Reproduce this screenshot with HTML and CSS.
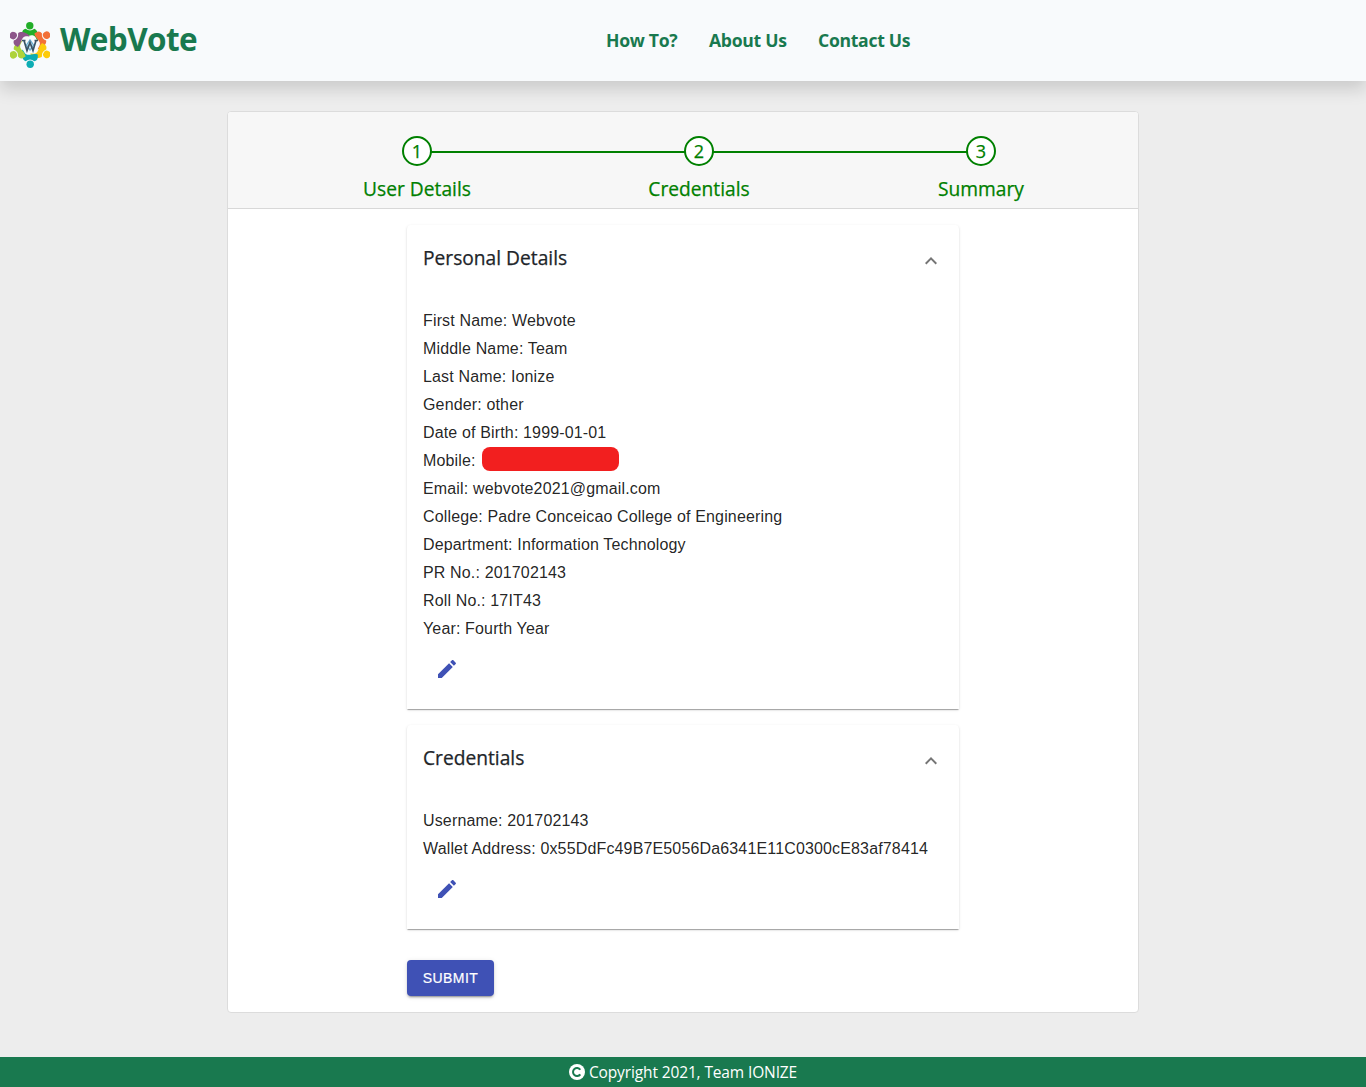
FILE: index.html
```html
<!DOCTYPE html>
<html lang="en">
<head>
<meta charset="utf-8">
<title>WebVote</title>
<link rel="stylesheet" href="styles.css">
</head>
<body>
<header class="navbar">
  <a class="brand">
    <svg class="logo" viewBox="0 0 40 46" aria-hidden="true">
      <defs><g id="person"><circle cx="19.800" cy="3.700" r="3.700"/><path d="M12.200 13.500V10.500Q12.500 7.500 15.700 6.800q4.300 3.200 8.600 0c2.700.9 4 4.600 4 8 0 1.600-.4 2.700-.9 3.700-1.400-2-2-4.600-4.700-5.200-3-.6-6 1.700-10.500.2z"/></g></defs>
      <use href="#person" fill="#22ae28"/>
      <use href="#person" fill="#f27038" transform="rotate(60 20 23)"/>
      <use href="#person" fill="#fdcb0b" transform="rotate(120 20 23)"/>
      <use href="#person" fill="#0dadb4" transform="rotate(180 20 23)"/>
      <use href="#person" fill="#aed33b" transform="rotate(240 20 23)"/>
      <use href="#person" fill="#8d558a" transform="rotate(300 20 23)"/>
      <path d="M16.500 23l3.500-5 3.500 5-3.500 5z" fill="#d8edf7" stroke="#69aed2" stroke-width="1.300"/>
      <path d="M12 18.500h3.500m9 0H28M14 18.500l3 10 3-8 3 8 3-10" fill="none" stroke="#3a5365" stroke-width="1.700"/>
    </svg>
    <span class="brand-name">WebVote</span>
  </a>
  <nav class="nav-links"><a class="how">How To?</a><a class="about">About Us</a><a class="contact">Contact Us</a></nav>
</header>
<main class="page">
  <section class="card">
    <ol class="stepper">
      <li class="step"><span class="dot">1</span><span class="label">User Details</span></li>
      <li class="step"><span class="dot">2</span><span class="label">Credentials</span></li>
      <li class="step"><span class="dot">3</span><span class="label">Summary</span></li>
    </ol>
    <div class="content">
      <article class="panel">
        <div class="panel-head"><h2>Personal Details</h2>
          <svg class="chevron" viewBox="0 0 24 24"><path d="M12 8l-6 6 1.410 1.410L12 10.830l4.590 4.580L18 14z"/></svg></div>
        <div class="details">
          <p>First Name: Webvote</p>
          <p>Middle Name: Team</p>
          <p>Last Name: Ionize</p>
          <p>Gender: other</p>
          <p>Date of Birth: 1999-01-01</p>
          <p class="mobile">Mobile: <span class="redacted"></span></p>
          <p>Email: webvote2021@gmail.com</p>
          <p>College: Padre Conceicao College of Engineering</p>
          <p>Department: Information Technology</p>
          <p>PR No.: 201702143</p>
          <p>Roll No.: 17IT43</p>
          <p>Year: Fourth Year</p>
        </div>
        <svg class="edit" viewBox="0 0 24 24"><path d="M3 17.250V21h3.750L17.810 9.940l-3.750-3.750L3 17.250zM20.710 7.040c.39-.39.39-1.020 0-1.410l-2.340-2.340c-.39-.39-1.020-.39-1.410 0l-1.830 1.830 3.750 3.750 1.830-1.830z"/></svg>
      </article>
      <article class="panel">
        <div class="panel-head"><h2>Credentials</h2>
          <svg class="chevron" viewBox="0 0 24 24"><path d="M12 8l-6 6 1.410 1.410L12 10.830l4.590 4.580L18 14z"/></svg></div>
        <div class="details">
          <p>Username: 201702143</p>
          <p>Wallet Address: 0x55DdFc49B7E5056Da6341E11C0300cE83af78414</p>
        </div>
        <svg class="edit" viewBox="0 0 24 24"><path d="M3 17.250V21h3.750L17.810 9.940l-3.750-3.750L3 17.250zM20.710 7.040c.39-.39.39-1.020 0-1.410l-2.340-2.340c-.39-.39-1.020-.39-1.410 0l-1.830 1.830 3.750 3.750 1.830-1.830z"/></svg>
      </article>
      <button class="submit">SUBMIT</button>
    </div>
  </section>
</main>
<footer class="footer">
  <svg class="copy" viewBox="0 0 16 16"><circle cx="8" cy="8" r="8" fill="#fff"/><path d="M11.300 5.700A4 4 0 1 0 11.300 10.300" fill="none" stroke="#19794f" stroke-width="2"/></svg>
  <span>Copyright 2021, Team IONIZE</span>
</footer>
</body>
</html>
```
FILE: styles.css
```css
* { box-sizing: border-box; }
body {
  margin: 0;
  min-height: 1087px;
  display: flex;
  flex-direction: column;
  background: #ededed;
  color: #212529;
  font-family: "Open Sans", "Noto Sans", sans-serif;
}
.navbar {
  position: relative;
  height: 81px;
  display: flex;
  background: #f8fafc;
  box-shadow: 0 8px 16px rgba(0, 0, 0, .15);
  color: #19794f;
  font-weight: 700;
}
.brand { display: flex; width: 606px; padding-left: 10px; }
.logo { width: 40px; height: 46px; margin-top: 22px; }
.brand-name { margin: 17px 0 0 10px; font-size: 31.500px; line-height: 44px; letter-spacing: -.6px; }
.nav-links { display: flex; padding-top: 27px; font-size: 17.600px; line-height: 27px; letter-spacing: -.3px; white-space: nowrap; }
.how { width: 103px; }
.about { width: 109px; }

.page { flex: 1; padding-top: 30px; }
.card {
  width: 912px;
  height: 902px;
  margin: 0 auto;
  background: #fff;
  border: 1px solid #dcdcdc;
  border-radius: 4px;
  overflow: hidden;
}
.stepper {
  display: flex;
  height: 97px;
  margin: 0;
  padding: 24px 16px 0 48px;
  list-style: none;
  background: #f7f7f7;
  border-bottom: 1px solid #d8d8d8;
  color: #008000;
  -webkit-text-stroke: .25px;
}
.step { position: relative; width: 282px; flex: none; display: flex; flex-direction: column; align-items: center; }
.step + .step::before {
  content: "";
  position: absolute;
  top: 15px;
  right: 50%;
  width: 282px;
  height: 2px;
  background: #008000;
}
.dot {
  position: relative;
  z-index: 1;
  width: 30px;
  height: 30px;
  border: 2px solid #008000;
  border-radius: 50%;
  background: #fff;
  font-size: 18px;
  line-height: 26px;
  text-align: center;
}
.step:not(:last-child) .dot { z-index: 2; }
.label { margin-top: 9px; font-size: 19.200px; line-height: 28px; white-space: nowrap; }

.content { width: 552px; margin: 16px auto 0; }
.panel {
  margin-bottom: 16px;
  padding: 0 16px 28px;
  background: #fff;
  border-radius: 4px 4px 0 0;
  box-shadow: 0 2px 1px -1px rgba(0, 0, 0, .2), 0 1px 1px 0 rgba(0, 0, 0, .14), 0 1px 3px 0 rgba(0, 0, 0, .12);
}
.panel-head { display: flex; justify-content: space-between; height: 82px; }
.panel-head h2 { margin: 19px 0 0; font-size: 19.200px; line-height: 28px; font-weight: 400; -webkit-text-stroke: .25px; }
.chevron { width: 24px; height: 24px; margin-top: 24px; fill: #757575; }
.details {
  font: 16px/28px "Liberation Sans", Arial, sans-serif;
  letter-spacing: .15px;
  color: rgba(0, 0, 0, .87);
}
.details p { margin: 0; white-space: nowrap; }
.mobile { display: flex; }
.redacted { width: 137px; height: 24px; margin: .4px 0 0 6px; border-radius: 8px; background: #f21f1f; }
.edit { display: block; width: 24px; height: 24px; margin: 14px 0 0 12px; fill: #3f51b5; }
.submit {
  display: block;
  width: 87px;
  height: 36px;
  margin-top: 31px;
  padding: 0;
  border: 0;
  border-radius: 4px;
  background: #3f51b5;
  color: #fff;
  font: 14px/24px "Liberation Sans", Arial, sans-serif;
  letter-spacing: .4px;
  -webkit-text-stroke: .2px;
  box-shadow: 0 3px 1px -2px rgba(0, 0, 0, .2), 0 2px 2px 0 rgba(0, 0, 0, .14), 0 1px 5px 0 rgba(0, 0, 0, .12);
}
.footer {
  height: 30px;
  display: flex;
  justify-content: center;
  align-items: center;
  gap: 4px;
  background: #19794f;
  color: #fff;
  font-size: 15.500px;
  line-height: 30px;
  letter-spacing: -.13px;
}
.copy { width: 16px; height: 16px; }
```
